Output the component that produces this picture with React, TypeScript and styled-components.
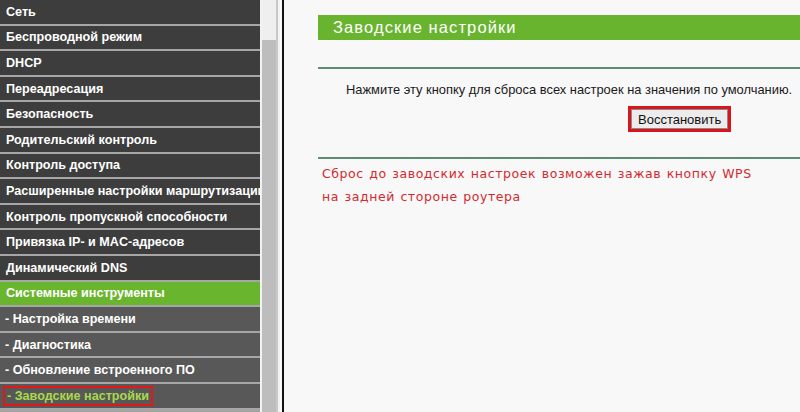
import React from "react";
import styled, { createGlobalStyle } from "styled-components";

const Global = createGlobalStyle`
  html, body { margin: 0; padding: 0; background: #f8f8f8; }
  * { box-sizing: border-box; }
`;

const Page = styled.div`
  display: flex;
  width: 800px;
  height: 412px;
  overflow: hidden;
  background: #f8f8f8;
`;

const Menu = styled.nav`
  width: 260px;
  flex: none;
  display: flex;
  flex-direction: column;
  background: #a3a3a3;
  overflow: hidden;
`;

const Item = styled.div<{ $kind: "main" | "active" | "sub" }>`
  flex: none;
  height: 25.6px;
  border-bottom: 2px solid #a6a6a6;
  display: flex;
  align-items: center;
  padding-left: ${(p) => (p.$kind === "sub" ? "5px" : "6px")};
  background: ${(p) =>
    p.$kind === "active" ? "#6ab52e" : p.$kind === "sub" ? "#585858" : "#3d3d3d"};
  color: #ffffff;
  font-family: "Liberation Sans", Arial, sans-serif;
  font-weight: bold;
  font-size: 12.6px;
  white-space: nowrap;
  overflow: hidden;
`;

const Current = styled.span`
  color: #a9d84a;
  border: 2px solid #e01818;
  padding: 1px 2px 1px 2px;
  margin-left: -2px;
`;

const Gutter = styled.div`
  width: 2px;
  flex: none;
  background: #f2f2f2;
`;

const Scrollbar = styled.div`
  width: 14px;
  flex: none;
  display: flex;
  flex-direction: column;
  background: #ececec;
`;

const Track = styled.div`
  height: 40px;
  flex: none;
  background: #efefef;
`;

const Thumb = styled.div`
  flex: 1;
  background: #bdbdbd;
`;

const Frame = styled.div`
  width: 8px;
  flex: none;
  background: #f2f2f2;
  border-left: 2px solid #c8c8c8;
  border-right: 2px solid #111;
  box-shadow: inset -2px 0 0 #fafafa;
`;

const Content = styled.main`
  flex: 1;
  padding: 15px 0 0 34px;
  display: flex;
  flex-direction: column;
`;

const TitleBar = styled.div`
  height: 25px;
  background: #69b42f;
  color: #fff;
  font-family: "Liberation Sans", Arial, sans-serif;
  font-size: 16.5px;
  display: flex;
  align-items: center;
  padding-left: 15px;
  letter-spacing: 1.1px;
`;

const Rule = styled.div<{ $top: number }>`
  margin-top: ${(p) => p.$top}px;
  height: 2px;
  background: #5c8c74;
`;

const Note = styled.p`
  margin: 14px 0 0 28px;
  font-family: "Liberation Sans", Arial, sans-serif;
  font-size: 12.9px;
  color: #1a1a1a;
  white-space: nowrap;
  line-height: 14px;
`;

const ButtonRow = styled.div`
  display: flex;
  padding-left: 310px;
  margin-top: 9px;
`;

const Highlight = styled.div`
  border: 2px solid #d8151d;
  padding: 1px;
  background: #d8151d;
`;

const Button = styled.button`
  height: 20px;
  padding: 0 6px;
  border: 1px solid #8a8a8a;
  background: #ececec;
  font-family: "Liberation Sans", Arial, sans-serif;
  font-size: 13px;
  color: #111;
`;

const Warning = styled.div`
  margin: 3px 0 0 4px;
  font-family: "DejaVu Sans", Verdana, sans-serif;
  font-size: 12.5px;
  line-height: 23px;
  color: #d42a2e;
  letter-spacing: 0.57px;
  word-spacing: 1px;
`;

const items: { label: string; kind: "main" | "active" | "sub" }[] = [
  { label: "Сеть", kind: "main" },
  { label: "Беспроводной режим", kind: "main" },
  { label: "DHCP", kind: "main" },
  { label: "Переадресация", kind: "main" },
  { label: "Безопасность", kind: "main" },
  { label: "Родительский контроль", kind: "main" },
  { label: "Контроль доступа", kind: "main" },
  { label: "Расширенные настройки маршрутизации", kind: "main" },
  { label: "Контроль пропускной способности", kind: "main" },
  { label: "Привязка IP- и MAC-адресов", kind: "main" },
  { label: "Динамический DNS", kind: "main" },
  { label: "Системные инструменты", kind: "active" },
  { label: "- Настройка времени", kind: "sub" },
  { label: "- Диагностика", kind: "sub" },
  { label: "- Обновление встроенного ПО", kind: "sub" },
];

export default function App() {
  return (
    <>
      <Global />
      <Page>
        <Menu>
          {items.map((it) => (
            <Item key={it.label} $kind={it.kind}>
              {it.label}
            </Item>
          ))}
          <Item $kind="sub">
            <Current>- Заводские настройки</Current>
          </Item>
        </Menu>
        <Gutter />
        <Scrollbar>
          <Track />
          <Thumb />
        </Scrollbar>
        <Frame />
        <Content>
          <TitleBar>Заводские настройки</TitleBar>
          <Rule $top={27} />
          <Note>Нажмите эту кнопку для сброса всех настроек на значения по умолчанию.</Note>
          <ButtonRow>
            <Highlight>
              <Button>Восстановить</Button>
            </Highlight>
          </ButtonRow>
          <Rule $top={25} />
          <Warning>
            Сброс до заводских настроек возможен зажав кнопку WPS
            <br />
            на задней стороне роутера
          </Warning>
        </Content>
      </Page>
    </>
  );
}
